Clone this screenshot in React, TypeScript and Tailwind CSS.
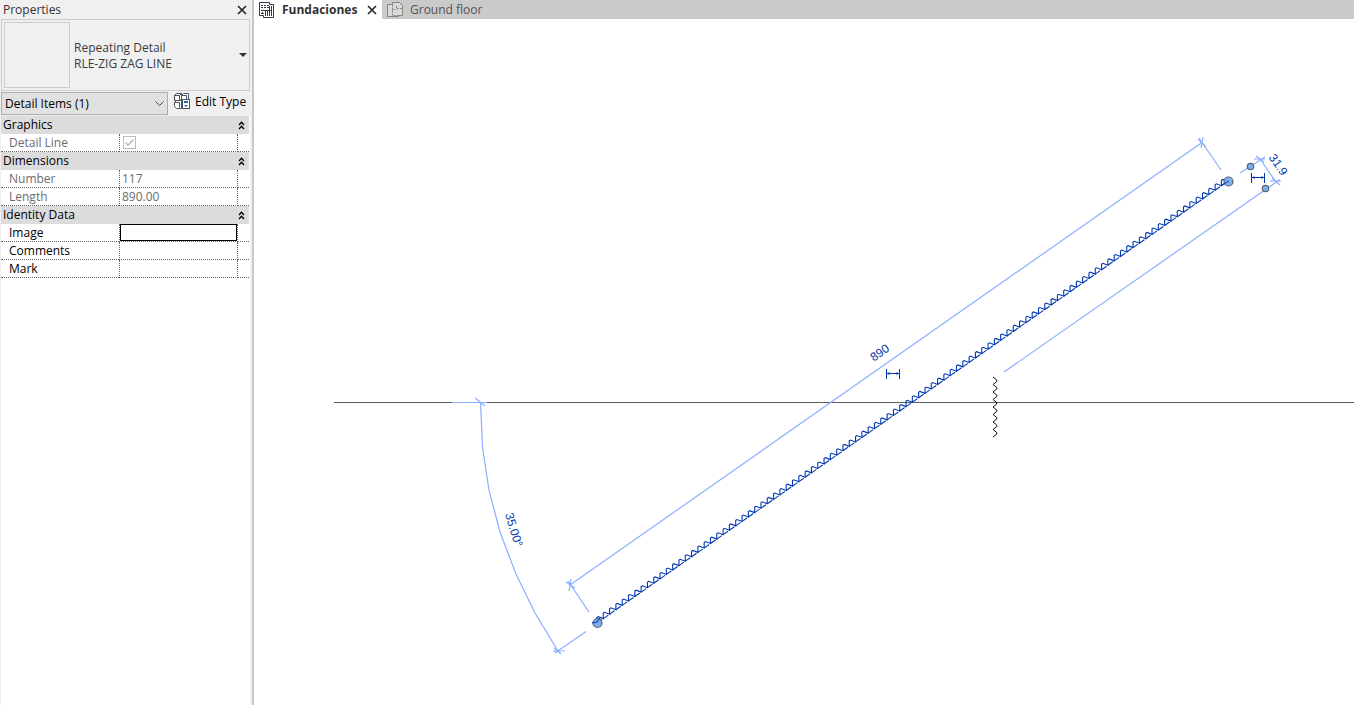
import React from 'react';

type Row = {
  id: string;
  label: string;
  kind: 'check' | 'readonly' | 'text';
  value?: string;
  active?: boolean;
};

type Group = {
  title: string;
  rows: Row[];
};

const groups: Group[] = [
  {
    title: 'Graphics',
    rows: [{ id: 'detail-line', label: 'Detail Line', kind: 'check' }],
  },
  {
    title: 'Dimensions',
    rows: [
      { id: 'number', label: 'Number', kind: 'readonly', value: '117' },
      { id: 'length', label: 'Length', kind: 'readonly', value: '890.00' },
    ],
  },
  {
    title: 'Identity Data',
    rows: [
      { id: 'image', label: 'Image', kind: 'text', active: true },
      { id: 'comments', label: 'Comments', kind: 'text' },
      { id: 'mark', label: 'Mark', kind: 'text' },
    ],
  },
];

const CloseIcon = () => (
  <svg width="10" height="10" viewBox="0 0 10 10" fill="none" stroke="#222" strokeWidth="1.6">
    <path d="M1 1L9 9M9 1L1 9" />
  </svg>
);

const CollapseIcon = () => (
  <svg width="7" height="9" viewBox="0 0 7 9" fill="none" stroke="#000" strokeWidth="1.3">
    <path d="M1 4L3.5 1.3L6 4M1 8L3.5 5.3L6 8" />
  </svg>
);

const EditTypeIcon = () => (
  <svg width="17" height="17" viewBox="0 0 17 17" fill="#fff" stroke="#4a525c">
    <path d="M2.5 .5H7.5V6L6 7.5H.5V2.500ZM.5 2.500H5.5V7.5M5.5 2.500L7.5 .5" />
    <path d="M9.5 .5H14.5V6L13 7.5H7.5V2.500ZM7.5 2.500H12.5V7.5" />
    <path d="M2.5 7.5H7.5V15.500H2.500L.5 13.500V9.500ZM.5 9.500H5.5V14.5" />
    <rect x="8.5" y="6.5" width="7" height="9" />
    <path d="M10 9H14" stroke="#1f5fb8" strokeWidth="2" />
    <path d="M10 12H14L12 14Z" fill="#1f5fb8" stroke="none" />
  </svg>
);

const SheetIcon = () => (
  <svg width="16" height="16" viewBox="0 0 16 16" fill="#fff" stroke="#343b46">
    <path d="M.5 .5H10.5V2.500H14.5V15.5H4.500V13.5H.5Z" />
    <path d="M2 3.5H10" strokeDasharray="2 1" />
    <path d="M2 5.5H10" strokeDasharray="2 1" />
    <path d="M2 8.5H13M3.500 10V12M6.5 9V14M8.500 9V14M10.500 4V14M12.5 4V14" />
    <path d="M2 11.500H6" strokeDasharray="1 1" />
  </svg>
);

const PlanIcon = () => (
  <svg width="16" height="16" viewBox="0 0 16 16" fill="#dadada" stroke="#858585">
    <path d="M.5 2.500H5.500V.5H12.5L15.5 3.500V13.5H11.500V14.5H.5Z" />
    <path d="M5.500 2.500V13.500H11" fill="none" strokeDasharray="2 1" />
    <path d="M9.500 4V6.500H15M5.500 7.500H9.500" fill="none" strokeDasharray="2 1" />
  </svg>
);

const GroupRows = ({ group }: { group: Group }) => {
  const [open, setOpen] = React.useState(true);

  return (
    <tbody>
      <tr className="h-[18px] bg-[#dcdcdc]">
        <th colSpan={2} className="pl-0.5 text-left font-normal">
          {group.title}
        </th>
        <td>
          <button
            type="button"
            aria-label={`Collapse ${group.title}`}
            onClick={() => setOpen(!open)}
            className="flex h-4 w-full items-center justify-start"
          >
            <CollapseIcon />
          </button>
        </td>
      </tr>
      {open &&
        group.rows.map((row) => (
          <tr
            key={row.id}
            className={`h-[18px] ${row.kind === 'text' ? 'text-black' : 'text-[#6d6d6d]'}`}
          >
            <th className="border-b border-dotted border-[#666] pl-2 text-left font-normal">
              <label htmlFor={row.id} className="block">
                {row.label}
              </label>
            </th>
            <td className="border-x border-b border-dotted border-[#666]">
              {row.kind === 'check' && (
                <span className="grid h-4 items-center pl-[3px]">
                  <input
                    id={row.id}
                    type="checkbox"
                    defaultChecked
                    disabled
                    className="col-start-1 row-start-1 size-[13px] appearance-none border border-[#bcbcbc] bg-white"
                  />
                  <svg
                    className="pointer-events-none col-start-1 row-start-1"
                    width="13"
                    height="13"
                    viewBox="0 0 13 13"
                    fill="none"
                    stroke="#b4b4b4"
                    strokeWidth="1.3"
                  >
                    <path d="M2.5 6.5L5 9.2L10.5 3.5" />
                  </svg>
                </span>
              )}
              {row.kind !== 'check' && (
                <input
                  id={row.id}
                  type="text"
                  defaultValue={row.value}
                  readOnly={row.kind === 'readonly'}
                  className={`block h-[17px] w-full bg-transparent px-0.5 outline-none ${row.active ? 'border border-black' : ''}`}
                />
              )}
            </td>
            <td className="border-b border-dotted border-[#666]" />
          </tr>
        ))}
    </tbody>
  );
};

const PropertiesPanel = () => (
  <aside className="flex w-[254px] shrink-0 flex-col border-r-2 border-[#c8c8c8] bg-[#f0f0f0] pr-0.5 pl-px">
    <div className="flex h-[19px] items-center justify-between pr-[3px] pl-0.5 text-[#333]">
      <h2>Properties</h2>
      <button type="button" aria-label="Close properties">
        <CloseIcon />
      </button>
    </div>

    <button
      type="button"
      className="flex items-center border border-[#cdcdcd] p-0.5 text-left text-[#3a3a3a]"
    >
      <span className="size-[66px] border border-[#cdcdcd]" />
      <span className="flex-1 pt-0.5 pl-1 leading-4">
        Repeating Detail
        <br />
        RLE-ZIG ZAG LINE
      </span>
      <svg width="8" height="4" viewBox="0 0 8 4" fill="#333">
        <path d="M0 0H8L4 4Z" />
      </svg>
    </button>

    <div className="flex h-[25px] items-center">
      <div className="grid w-[167px] items-center">
        <select
          aria-label="Element filter"
          className="col-start-1 row-start-1 h-[23px] appearance-none border border-[#adadad] bg-[#e1e1e1] px-[3px] text-black"
        >
          <option>Detail Items (1)</option>
        </select>
        <svg
          className="pointer-events-none col-start-1 row-start-1 mr-1 justify-self-end"
          width="9"
          height="6"
          viewBox="0 0 9 6"
          fill="none"
          stroke="#444"
        >
          <path d="M.5 .5L4.5 4.5L8.5 .5" />
        </svg>
      </div>
      <button type="button" className="flex items-center gap-1 pb-1 pl-1.5 text-black">
        <EditTypeIcon />
        Edit Type
      </button>
    </div>

    <div className="flex-1 bg-white pr-px">
      <table className="w-full table-fixed border-separate border-spacing-0 text-black">
        <colgroup>
          <col />
          <col className="w-[119px]" />
          <col className="w-[11px]" />
        </colgroup>
        {groups.map((group) => (
          <GroupRows key={group.title} group={group} />
        ))}
      </table>
    </div>
  </aside>
);

const ViewTabs = () => (
  <div role="tablist" className="flex h-[19px] bg-[#cacaca]">
    <div className="flex w-32 items-center justify-between bg-white pr-[5px] pl-[5px]">
      <button type="button" role="tab" aria-selected="true" className="flex items-center gap-[7px] font-bold text-[#333]">
        <SheetIcon />
        Fundaciones
      </button>
      <button type="button" aria-label="Close Fundaciones">
        <CloseIcon />
      </button>
    </div>
    <button type="button" role="tab" aria-selected="false" className="flex items-center gap-[7px] pl-[5px] text-[#555]">
      <PlanIcon />
      Ground floor
    </button>
  </div>
);

// Zig zag drawn along +x from the origin, one tooth per step
const zigzag = (teeth: number, step: number, height: number) => {
  let d = 'M0 0';
  for (let i = 0; i < teeth; i++) {
    const x = i * step;
    d += `L${x + step * 0.4} ${-height}L${x + step * 0.6} ${-height}L${x + step} 0`;
  }
  return d;
};

const Grip = ({ x, y, r }: { x: number; y: number; r: number }) => (
  <circle cx={x} cy={y} r={r} fill="#70a8f0" fillOpacity="0.9" stroke="#58646f" strokeWidth="1.2" />
);

const DimensionToggle = ({ x, y }: { x: number; y: number }) => (
  <g transform={`translate(${x} ${y})`} stroke="#0038b0" strokeWidth="1">
    <path d="M.5 0V10M13.5 0V10M1 4.5H13" fill="none" />
    <path d="M1 4.5L3.5 3V6ZM13 4.5L10.5 3V6Z" fill="#0038b0" stroke="none" />
  </g>
);

const DrawingView = () => (
  <svg
    className="min-h-0 w-full flex-1 bg-white"
    viewBox="254 19 1100 686"
    preserveAspectRatio="xMinYMin slice"
    fill="none"
    role="img"
    aria-label="Drawing view"
  >
    <path d="M334 402.5H1354" stroke="#5c5c5c" />

    {/* temporary dimensions */}
    <g stroke="#8caeff" strokeWidth="1.2">
      <path d="M570 585L1202 142.5" />
      <path d="M568 581L589 612M1199 138L1221 170" />
      <path d="M566 582L575 588M571 579L569 591M1198 139L1206 147M1203 137L1201 148" />
      <path d="M1004 372L1280 179.5M1240 173L1265 157" />
      <path d="M1260 159L1276 182" />
      <path d="M1254 159H1265M1256 156L1264 162M1270 181H1281M1272 178L1280 185" />
      <path d="M452 402.5H487M475 398L485 406" />
      <path d="M480.5 402L482.5 447L489 490L500 532L516 574L535 613L558 651" />
      <path d="M555 653L586 631.5M553 651H565M554 648L561 654" />
    </g>

    {/* short zig zag in the model */}
    <path
      d={zigzag(8, 7.5, 3.75)}
      transform="translate(993 377) rotate(90)"
      stroke="#111"
      strokeWidth="1"
    />

    {/* selected repeating detail */}
    <g transform="translate(597 623) rotate(-35)" stroke="#0038b0">
      <path d="M0 0H770" strokeWidth="1.1" strokeDasharray="6 1.7" />
      <path d={zigzag(100, 7.7, 4.5)} strokeWidth="1.1" />
    </g>

    <Grip x={597.5} y={623} r={4.5} />
    <Grip x={1228.5} y={181.5} r={4.5} />
    <Grip x={1250.5} y={166.5} r={3.2} />
    <Grip x={1265.5} y={188.5} r={3.2} />
    <path d="M592 623L597 622L600 618M1222 185L1229 181" stroke="#0038b0" />

    <DimensionToggle x={886} y={369} />
    <DimensionToggle x={1251} y={173} />

    <g fill="#0038a8" fontFamily="Liberation Sans, Arial, sans-serif" fontSize="12" textAnchor="middle">
      <text transform="translate(882 356) rotate(-35)">890</text>
      <text transform="translate(1275 167) rotate(55)">31.9</text>
      <text transform="translate(510 531) rotate(73)">35.00°</text>
    </g>
  </svg>
);

export default function App() {
  return (
    <div className="flex min-h-screen bg-white font-['Open_Sans','Noto_Sans',sans-serif] text-[12px] leading-4">
      <PropertiesPanel />
      <main className="flex min-w-0 flex-1 flex-col">
        <ViewTabs />
        <DrawingView />
      </main>
    </div>
  );
}
